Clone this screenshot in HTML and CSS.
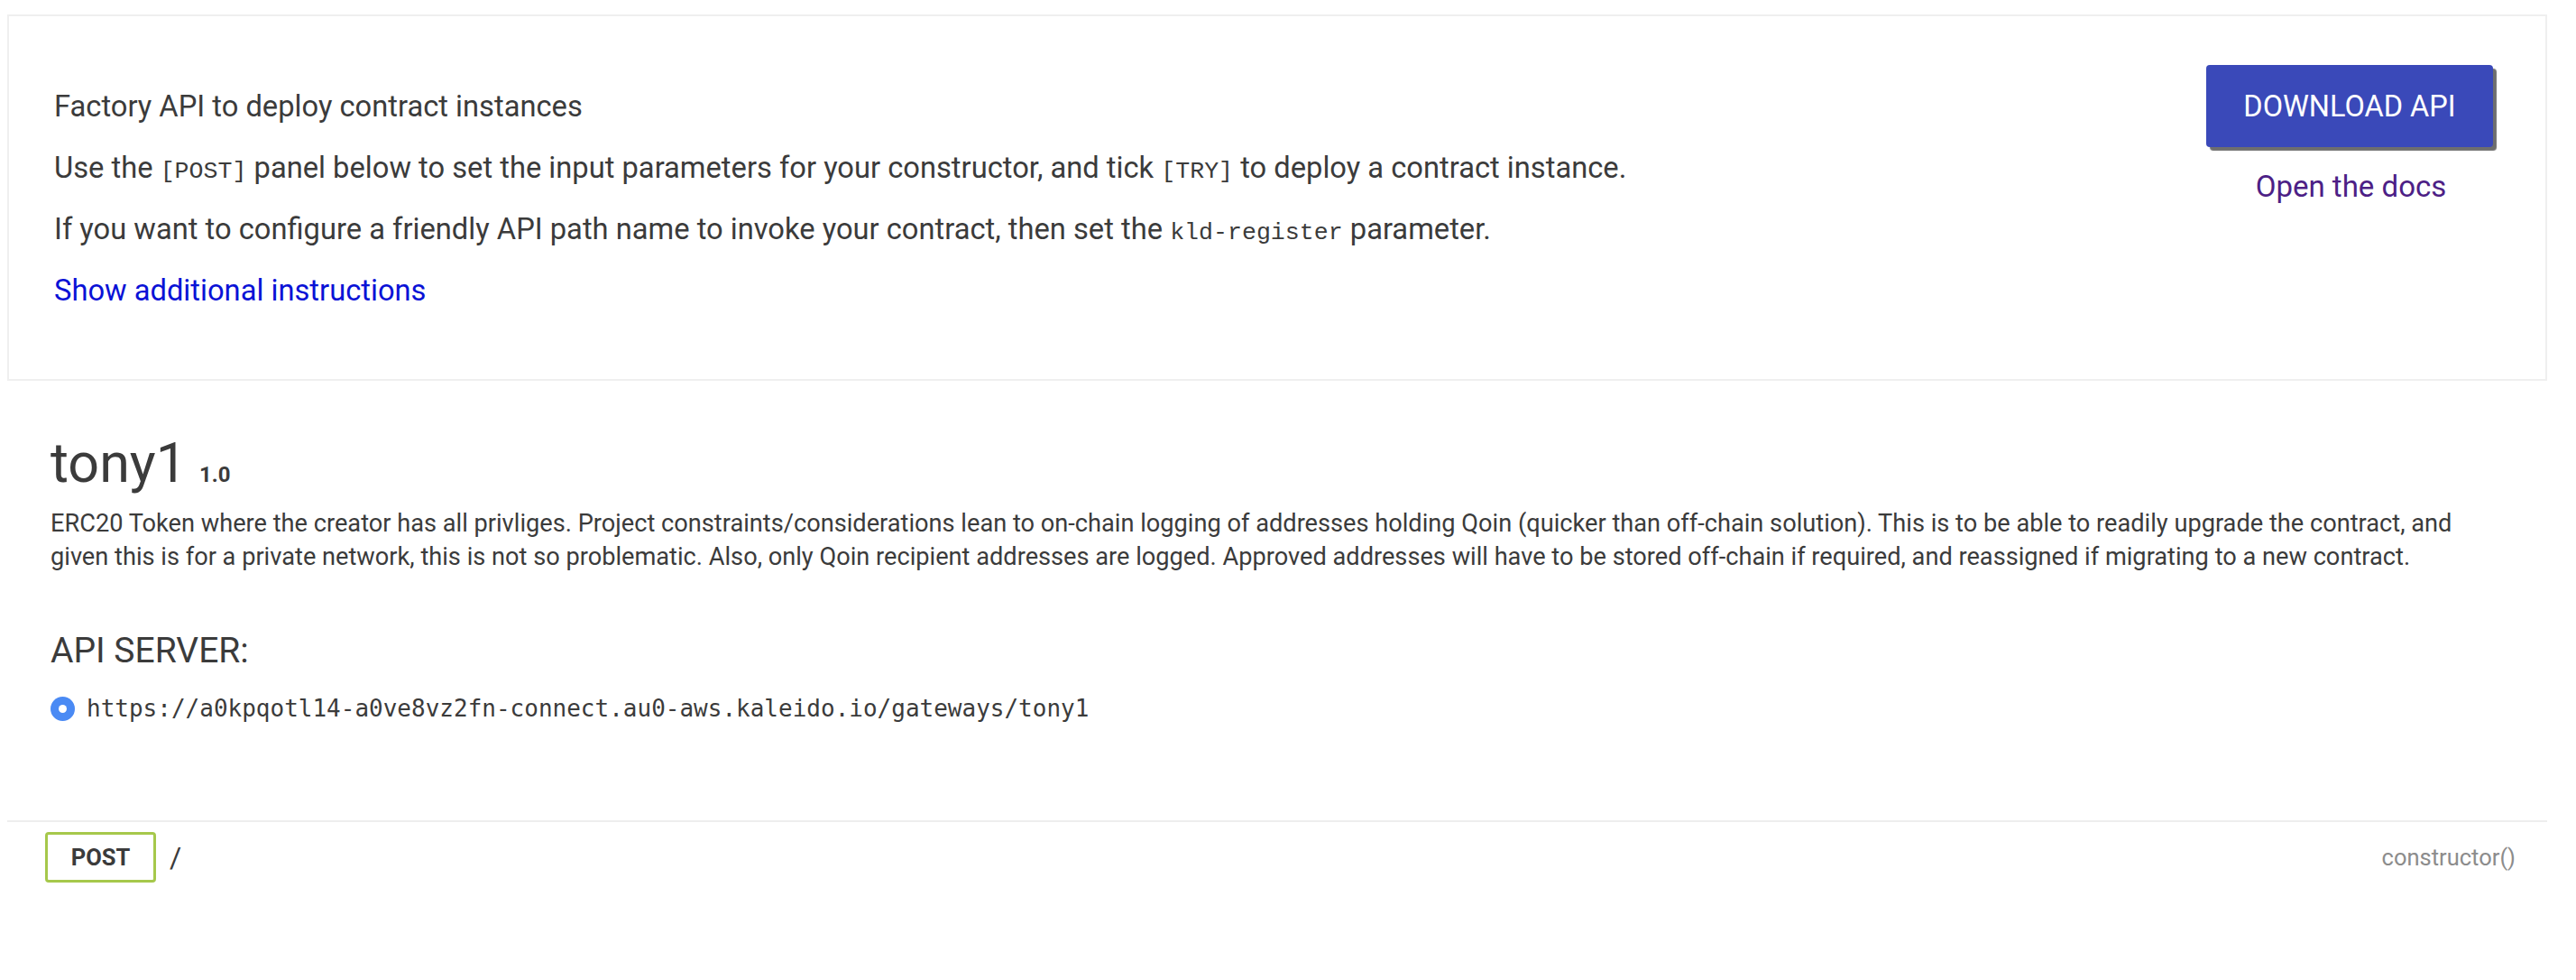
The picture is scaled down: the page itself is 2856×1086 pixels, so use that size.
FILE: index.html
```html
<!DOCTYPE html>
<html lang="en">
<head>
<meta charset="utf-8">
<title>tony1 API</title>
<link rel="stylesheet" href="styles.css">
</head>
<body>
<div class="wrap">
  <section class="intro">
    <div class="intro-text">
      <p>Factory API to deploy contract instances</p>
      <p>Use the <code>[POST]</code> panel below to set the input parameters for your constructor, and tick <code>[TRY]</code> to deploy a contract instance.</p>
      <p>If you want to configure a friendly API path name to invoke your contract, then set the <code>kld-register</code> parameter.</p>
      <p><a class="link" href="#">Show additional instructions</a></p>
    </div>
    <div class="intro-actions">
      <button class="download-btn" type="button">DOWNLOAD API</button>
      <a class="docs-link" href="#">Open the docs</a>
    </div>
  </section>

  <section class="info">
    <h2 class="title">tony1 <small class="version">1.0</small></h2>
    <p class="description">ERC20 Token where the creator has all privliges. Project constraints/considerations lean to on-chain logging of addresses holding Qoin (quicker than off-chain solution). This is to be able to readily upgrade the contract, and given this is for a private network, this is not so problematic. Also, only Qoin recipient addresses are logged. Approved addresses will have to be stored off-chain if required, and reassigned if migrating to a new contract.</p>
    <h3 class="server-label">API SERVER:</h3>
    <div class="server-row">
      <span class="radio"><span class="radio-dot"></span></span>
      <span class="server-url">https://a0kpqotl14-a0ve8vz2fn-connect.au0-aws.kaleido.io/gateways/tony1</span>
    </div>
  </section>

  <section class="ops">
    <div class="op-row">
      <span class="method">POST</span>
      <span class="path">/</span>
      <span class="op-summary">constructor()</span>
    </div>
  </section>
</div>
</body>
</html>
```

FILE: styles.css
```css
html, body {
  margin: 0;
  padding: 0;
  background: #ffffff;
}

body {
  font-family: Roboto, "Liberation Sans", Arial, sans-serif;
  color: #3b3b3b;
}

.wrap {
  margin: 16px 32px 0 8px;
}

/* ---------- intro box ---------- */
.intro {
  display: flex;
  justify-content: space-between;
  align-items: flex-start;
  border: 2px solid #efefef;
  padding: 54px 55px 52px 50px;
}

.intro-text {
  padding: 28px 0;
}

.intro-text p {
  margin: 0 0 32px 0;
  font-size: 32.7px;
  line-height: 36px;
  height: 36px;
}

.intro-text p:last-child {
  margin-bottom: 0;
}

.intro-text code {
  font-family: "Liberation Mono", "Courier New", monospace;
  font-size: 26.6px;
  line-height: 1;
}

.link {
  color: #0a12d6;
  text-decoration: none;
}

.intro-actions {
  display: flex;
  flex-direction: column;
  align-items: center;
  width: 321px;
}

.download-btn {
  width: 318px;
  height: 91px;
  align-self: flex-start;
  border: none;
  border-radius: 4px;
  background: #3a49b9;
  color: #ffffff;
  font-family: Roboto, "Liberation Sans", Arial, sans-serif;
  font-size: 32.5px;
  box-shadow: 4px 4px 1px #6e6e6e;
  padding: 0;
}

.docs-link {
  margin-top: 26px;
  font-size: 33px;
  line-height: 36px;
  color: #4d1f86;
  text-decoration: none;
}

/* ---------- info ---------- */
.info {
  padding: 55px 48px 0 48px;
}

.title {
  margin: 0;
  font-size: 61px;
  font-weight: 400;
  line-height: 72px;
  color: #3b3b3b;
  display: flex;
  align-items: baseline;
}

.version {
  font-size: 24px;
  font-weight: 700;
  margin-left: 14px;
  color: #3b3b3b;
}

.description {
  margin: 0;
  font-size: 27.2px;
  line-height: 37px;
}

.server-label {
  margin: 62px 0 0 0;
  font-size: 39px;
  font-weight: 400;
  line-height: 46px;
}

.server-row {
  display: flex;
  align-items: center;
  gap: 13px;
  margin-top: 23px;
  height: 36px;
}

.radio {
  width: 27px;
  height: 27px;
  border-radius: 50%;
  background: #4a8af4;
  display: flex;
  align-items: center;
  justify-content: center;
  flex: none;
}

.radio-dot {
  width: 9px;
  height: 9px;
  border-radius: 50%;
  background: #ffffff;
}

.server-url {
  font-family: "DejaVu Sans Mono", "Liberation Mono", monospace;
  font-size: 26px;
  color: #3b3b3b;
}

/* ---------- operations ---------- */
.ops {
  margin-top: 106px;
  border-top: 2px solid #eeeeee;
}

.op-row {
  display: flex;
  align-items: center;
  padding: 11px 35px 0 42px;
}

.method {
  box-sizing: border-box;
  width: 123px;
  height: 56px;
  border: 3px solid #a6c84b;
  border-radius: 4px;
  display: flex;
  align-items: center;
  justify-content: center;
  font-size: 25.5px;
  font-weight: 700;
  color: #3b3b3b;
}

.path {
  margin-left: 15px;
  font-size: 32px;
  color: #3b3b3b;
}

.op-summary {
  margin-left: auto;
  font-size: 25.5px;
  color: #8c8c8c;
}
```
